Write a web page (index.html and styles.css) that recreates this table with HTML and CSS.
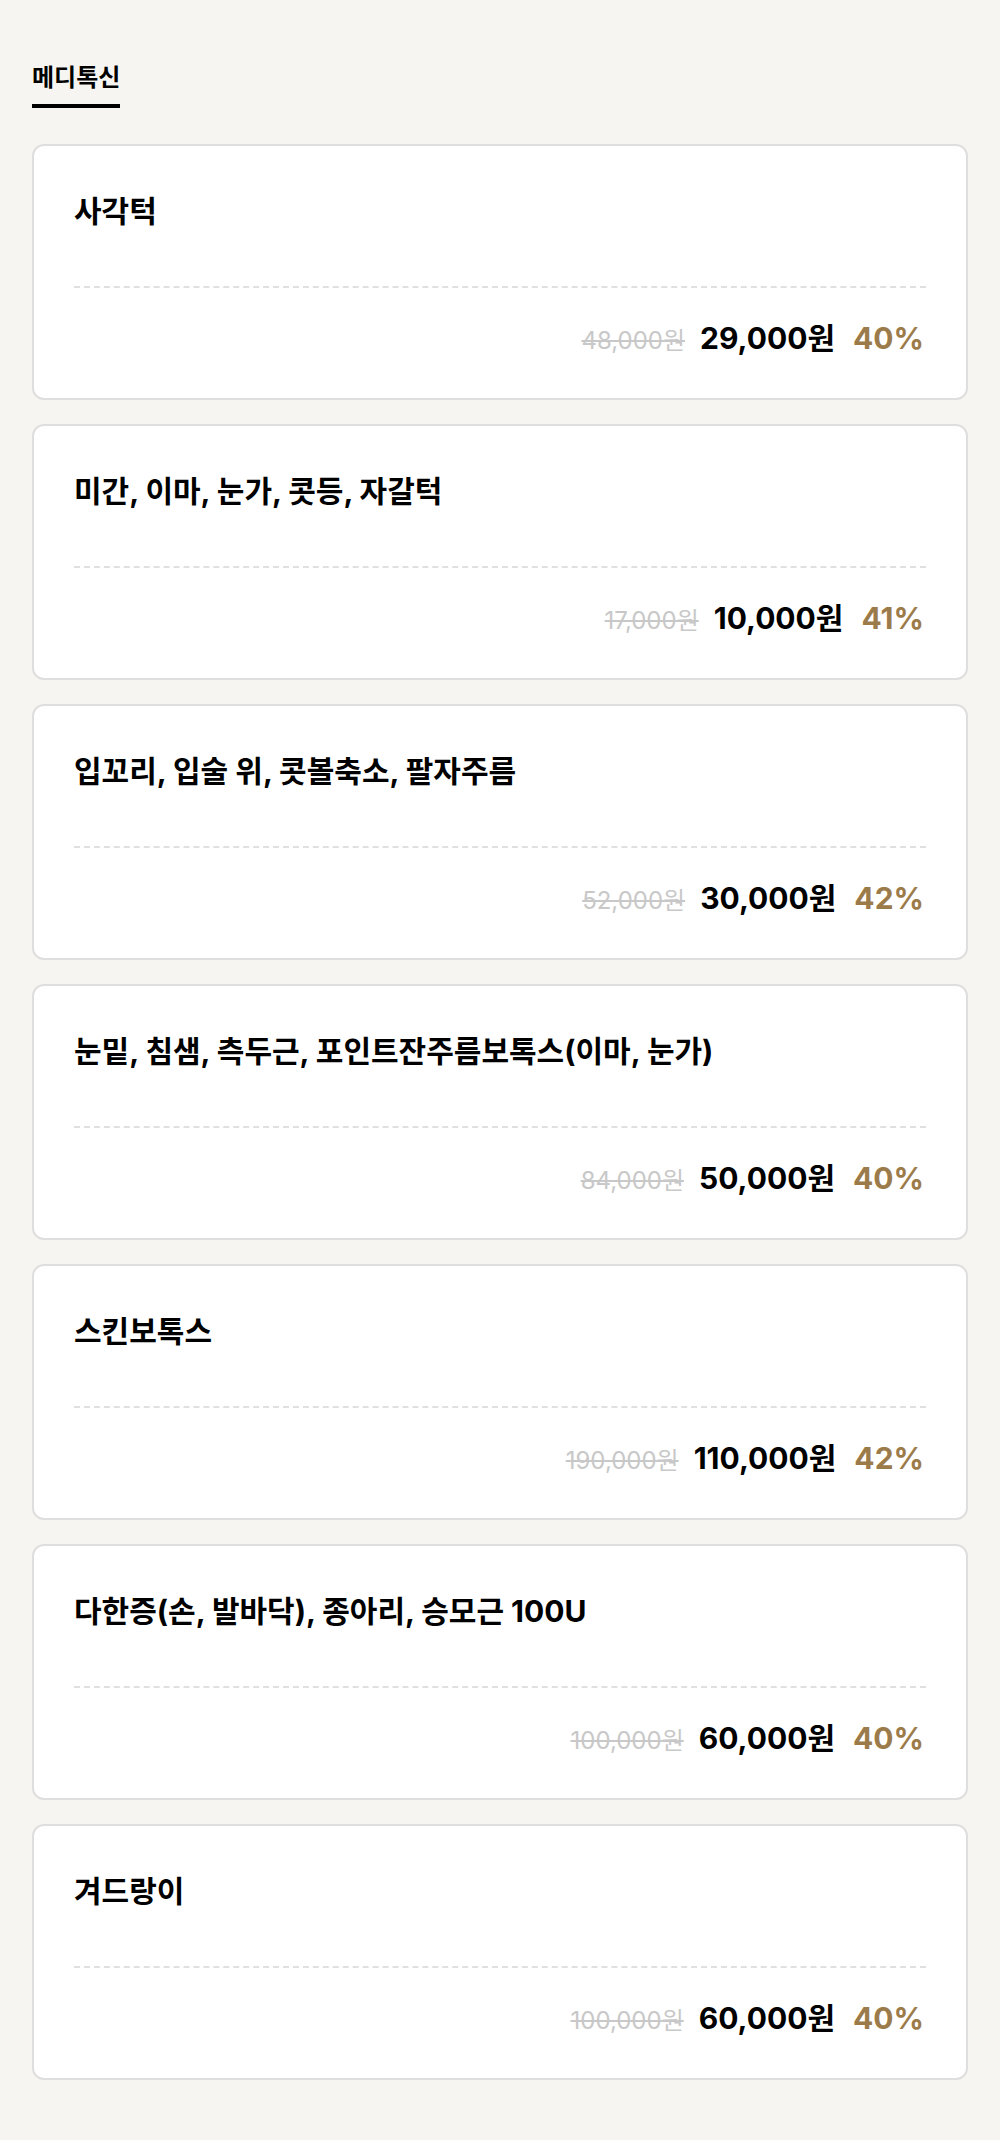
FILE: index.html
```html
<!DOCTYPE html>
<html lang="ko">
<head>
  <meta charset="UTF-8">
  <meta name="viewport" content="width=device-width, initial-scale=1.0">
  <title>메디톡신 - 가격표</title>
  <link rel="stylesheet" href="styles.css">
</head>
<body>
  <div class="page">
    <div class="tabs">
      <span class="tab active">메디톡신</span>
    </div>

    <ul class="price-list">
      <li class="item">
        <h3 class="item-name">사각턱</h3>
        <div class="item-price">
          <span class="origin">48,000원</span>
          <span class="sale">29,000원</span>
          <span class="rate">40%</span>
        </div>
      </li>
      <li class="item">
        <h3 class="item-name">미간, 이마, 눈가, 콧등, 자갈턱</h3>
        <div class="item-price">
          <span class="origin">17,000원</span>
          <span class="sale">10,000원</span>
          <span class="rate">41%</span>
        </div>
      </li>
      <li class="item">
        <h3 class="item-name">입꼬리, 입술 위, 콧볼축소, 팔자주름</h3>
        <div class="item-price">
          <span class="origin">52,000원</span>
          <span class="sale">30,000원</span>
          <span class="rate">42%</span>
        </div>
      </li>
      <li class="item">
        <h3 class="item-name">눈밑, 침샘, 측두근, 포인트잔주름보톡스(이마, 눈가)</h3>
        <div class="item-price">
          <span class="origin">84,000원</span>
          <span class="sale">50,000원</span>
          <span class="rate">40%</span>
        </div>
      </li>
      <li class="item">
        <h3 class="item-name">스킨보톡스</h3>
        <div class="item-price">
          <span class="origin">190,000원</span>
          <span class="sale">110,000원</span>
          <span class="rate">42%</span>
        </div>
      </li>
      <li class="item">
        <h3 class="item-name">다한증(손, 발바닥), 종아리, 승모근 100U</h3>
        <div class="item-price">
          <span class="origin">100,000원</span>
          <span class="sale">60,000원</span>
          <span class="rate">40%</span>
        </div>
      </li>
      <li class="item">
        <h3 class="item-name">겨드랑이</h3>
        <div class="item-price">
          <span class="origin">100,000원</span>
          <span class="sale">60,000원</span>
          <span class="rate">40%</span>
        </div>
      </li>
    </ul>
  </div>
</body>
</html>
```

FILE: styles.css
```css
body {
  margin: 0;
  padding: 0;
  background-color: #f6f5f1;
  font-family: Inter, "Noto Sans CJK KR", sans-serif;
  color: #000;
}
.page {
  padding: 62px 32px 60px;
}
.tabs {
  display: flex;
  margin-bottom: 36px;
}
.tab {
  font-size: 24px;
  font-weight: 700;
  line-height: 32px;
  padding-bottom: 10px;
  border-bottom: 4px solid #000;
}
.price-list {
  list-style: none;
  margin: 0;
  padding: 0;
  display: flex;
  flex-direction: column;
  gap: 24px;
}
.item {
  background: #fff;
  border: 2px solid #dedede;
  border-radius: 12px;
  padding: 44px 40px 0;
  height: 256px;
  box-sizing: border-box;
}
.item-name {
  margin: 0;
  font-size: 30px;
  font-weight: 700;
  line-height: 42px;
  height: 96px;
  border-bottom: 2px dashed #e0e0e0;
}
.item-price {
  display: flex;
  justify-content: flex-end;
  align-items: baseline;
  padding-top: 26px;
  padding-right: 2px;
}
.origin {
  font-size: 24px;
  color: #c8c8c8;
  text-decoration: line-through;
  margin-right: 15px;
}
.sale {
  font-size: 30px;
  font-weight: 700;
  margin-right: 18px;
}
.rate {
  font-size: 30px;
  font-weight: 700;
  color: #9c7b4b;
}
```
